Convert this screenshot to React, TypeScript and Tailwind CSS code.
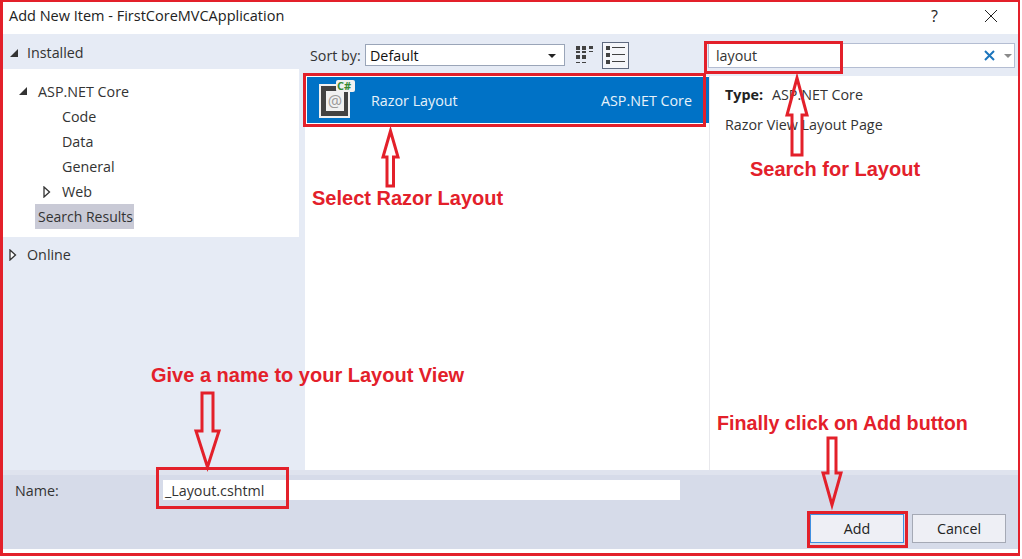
import React from 'react';

const ui = "font-['Open_Sans','Noto_Sans',sans-serif]";
const note = "absolute font-['Liberation_Sans',sans-serif] font-bold leading-[24px] text-[#e3202a] whitespace-nowrap";
const box = 'absolute border-[3px] border-[#e3202a]';

const TriOpen = ({ className }: { className: string }) => (
  <svg width="8" height="12" viewBox="0 0 8 12" className={className}>
    <path d="M1 1 L6.5 6 L1 11 Z" fill="#fff" stroke="#333" strokeWidth="1.3" />
  </svg>
);

const TriDown = ({ className }: { className: string }) => (
  <svg width="10" height="10" viewBox="0 0 10 10" className={className}>
    <path d="M9 1 V9 H1 Z" fill="#333" />
  </svg>
);

// outlined block arrows from the annotations, points are page coordinates
const Arrows = () => (
  <svg width="1022" height="559" viewBox="0 0 1022 559" className="absolute left-0 top-0 pointer-events-none">
    <g fill="none" stroke="#e3202a" strokeWidth="3" strokeLinejoin="miter">
      <path d="M390.5 131 L398 157 H393.5 V186 H387 V157 H383 Z" />
      <path d="M797 78 L807 115 H802 V155 H792 V115 H787 Z" />
      <path d="M202 393 H213 V431 H219 L207.500 467 L196 431 H202 Z" />
      <path d="M828 438 H836 V473 H841 L832 505 L823 473 H828 Z" />
    </g>
  </svg>
);

const RazorIcon = () => (
  <svg width="38" height="38" viewBox="0 0 38 38" className="shrink-0 mb-[2px] overflow-visible">
    <rect x="0" y="4" width="31" height="34" fill="#f1f1f1" />
    <rect x="2" y="6" width="27" height="30" fill="#424242" />
    <rect x="7" y="11" width="18" height="20" fill="#f1f1f1" />
    <text x="16" y="27" textAnchor="middle" fontSize="16" fontFamily="Open Sans, sans-serif" fill="#9a9a9a">@</text>
    <rect x="17" y="0" width="19" height="12" rx="2" fill="#f1f1f1" />
    <text x="18" y="10" fontSize="11" fontWeight="700" fontFamily="Open Sans, sans-serif" fill="#388a34">C#</text>
  </svg>
);

const GridViewIcon = () => (
  <svg width="18" height="18" viewBox="0 0 18 18">
    <g fill="#424242">
      <rect x="0" y="0" width="4" height="4" />
      <rect x="6" y="0" width="4" height="4" />
      <rect x="13" y="0" width="4" height="3" />
      <rect x="0" y="5" width="4" height="2" />
      <rect x="6" y="5" width="4" height="2" />
      <rect x="13" y="5" width="4" height="1" />
      <rect x="0" y="9" width="4" height="4" />
      <rect x="6" y="9" width="4" height="4" />
      <rect x="0" y="16" width="4" height="1" />
      <rect x="6" y="16" width="4" height="1" />
    </g>
  </svg>
);

const ListViewIcon = () => (
  <svg width="19" height="18" viewBox="0 0 19 18">
    <g fill="#424242">
      <rect x="0" y="0" width="4" height="4" />
      <rect x="0" y="7" width="4" height="4" />
      <rect x="0" y="14" width="4" height="4" />
      <rect x="6" y="1" width="13" height="1" />
      <rect x="6" y="8" width="13" height="1" />
      <rect x="6" y="15" width="13" height="1" />
    </g>
  </svg>
);

const App: React.FC = () => {
  return (
    <div className={`relative w-[1022px] h-[559px] bg-white overflow-hidden text-[14.3px] text-[#333] ${ui}`}>
      <div className="flex flex-col w-[1020px] h-[556px] border-t-2 border-l-[3px] border-r-2 border-b-[3px] border-[#e3202a] bg-white">
        {/* title bar */}
        <div className="flex items-center h-[32px] shrink-0 pl-[6px] pb-[4px]">
          <span className="text-[14.5px] text-[#222]">Add New Item - FirstCoreMVCApplication</span>
          <span className="ml-auto text-[16px] text-[#222] mr-[46px]">?</span>
          <svg width="14" height="14" viewBox="0 0 14 14" className="mr-[20px]">
            <path d="M1 1 L13 13 M13 1 L1 13" stroke="#222" strokeWidth="1" fill="none" />
          </svg>
        </div>

        <div className="flex h-[436px] shrink-0">
          {/* left tree */}
          <div className="w-[302px] shrink-0 bg-[#e6ebf5] flex flex-col">
            <div className="flex items-center h-[35px] pl-[6px] pt-[2px]">
              <TriDown className="mr-[8px]" />
              <span>Installed</span>
            </div>
            <div className="w-[296px] h-[168px] bg-white pt-[10px] pl-[35px] leading-[25px]">
              <div className="relative">
                <TriDown className="absolute -left-[20px] top-[7px]" />
                ASP.NET Core
              </div>
              <div className="pl-[24px]">Code</div>
              <div className="pl-[24px]">Data</div>
              <div className="pl-[24px]">General</div>
              <div className="relative pl-[24px]">
                <TriOpen className="absolute left-[5px] top-[7px]" />
                Web
              </div>
              <div className="-ml-[3px] w-[99px] pl-[3px] bg-[#c9cad6] whitespace-nowrap text-[14px]">Search Results</div>
            </div>
            <div className="flex items-center h-[35px] pl-[6px]">
              <TriOpen className="mr-[10px]" />
              <span>Online</span>
            </div>
          </div>

          {/* right side */}
          <div className="flex-1 flex flex-col min-w-0">
            <div className="flex items-center h-[42px] shrink-0 bg-[#e6ebf5]">
              <span className="ml-[5px] w-[55px] pt-[1px]">Sort by:</span>
              <div className="flex items-center w-[200px] h-[22px] bg-white border border-[#9aa5b8] pl-[4px] pr-[8px] pt-[1px] text-[#111]">
                Default
                <span className="ml-auto w-0 h-0 border-x-[4px] border-x-transparent border-t-[4px] border-t-[#222]" />
              </div>
              <div className="ml-[11px]"><GridViewIcon /></div>
              <div className="flex items-center justify-center ml-[8px] w-[27px] h-[27px] bg-[#f5f6fa] border border-[#5f6a80]">
                <ListViewIcon />
              </div>
              <div className="flex items-center ml-[79px] w-[307px] h-[25px] bg-white border border-[#b4bdd2] pl-[7px] pt-[1px]">
                layout
                <svg width="11" height="11" viewBox="0 0 11 11" className="ml-auto">
                  <path d="M1 1 L10 10 M10 1 L1 10" stroke="#1c75bc" strokeWidth="2" fill="none" />
                </svg>
                <span className="ml-[9px] mr-[2px] w-0 h-0 border-x-[4px] border-x-transparent border-t-[4px] border-t-[#8a8a8a]" />
              </div>
            </div>

            <div className="flex flex-1 min-h-0 bg-white">
              <div className="w-[404px] shrink-0 pt-[1px] pl-[2px]">
                <div className="flex items-center h-[46px] bg-[#0072c6] pl-[12px] pr-[17px] text-[#e8f2fa]">
                  <RazorIcon />
                  <span className="ml-[14px] pt-[2px]">Razor Layout</span>
                  <span className="ml-auto pt-[2px]">ASP.NET Core</span>
                </div>
              </div>
              <div className="flex-1 border-l border-[#e8e8ec] pl-[15px] pt-[6px] leading-[20px]">
                <div className="mt-[3px]">
                  <span className="font-bold text-[#222] mr-[9px]">Type:</span>ASP.NET Core
                </div>
                <div className="mt-[10px]">Razor View Layout Page</div>
              </div>
            </div>
          </div>
        </div>

        {/* footer */}
        <div className="h-[5px] shrink-0 bg-[#dfe3ee]" />
        <div className="relative flex flex-col h-[74px] shrink-0 bg-[#d6dbe9]">
          <div className="flex items-center h-[20px] mt-[5px]">
            <span className="ml-[12px] w-[148px] pt-[2px]">Name:</span>
            <div className="w-[517px] h-[20px] bg-white pl-[2px] pt-[1px] leading-[20px]">_Layout.cshtml</div>
          </div>
          <div className="flex justify-end gap-[8px] mt-[14px] pr-[12px]">
            <button className="w-[94px] h-[29px] bg-[#eeeff5] border border-[#3f8fe0] pt-[1px] text-[#222]">Add</button>
            <button className="w-[94px] h-[29px] bg-[#eeeff5] border border-[#a5a9b5] pt-[1px] text-[#222]">Cancel</button>
          </div>
        </div>
      </div>

      {/* red annotations drawn on top of the dialog */}
      <div className={`${box} left-[303px] top-[73px] w-[403px] h-[54px]`} />
      <div className={`${box} left-[704px] top-[41px] w-[139px] h-[33px]`} />
      <div className={`${box} left-[156px] top-[467px] w-[133px] h-[42px]`} />
      <div className={`${box} left-[807px] top-[511px] w-[101px] h-[37px]`} />
      <Arrows />
      <span className={`${note} text-[20px] left-[312px] top-[186px]`}>Select Razor Layout</span>
      <span className={`${note} text-[20px] left-[750px] top-[157px]`}>Search for Layout</span>
      <span className={`${note} text-[20px] left-[151px] top-[363px]`}>Give a name to your Layout View</span>
      <span className={`${note} text-[19.7px] left-[717px] top-[411px]`}>Finally click on Add button</span>
    </div>
  );
};

export default App;
